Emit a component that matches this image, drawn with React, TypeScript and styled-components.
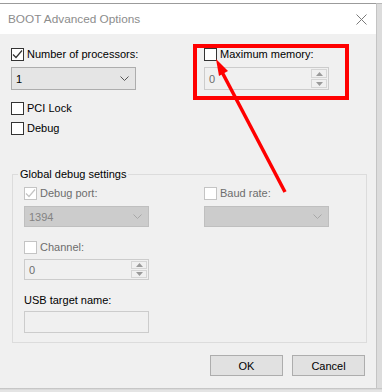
import React from "react";
import styled, { createGlobalStyle } from "styled-components";

const GlobalStyle = createGlobalStyle`
  html, body {
    margin: 0;
    padding: 0;
  }
  body {
    width: 382px;
    height: 392px;
    overflow: hidden;
    background: #ffffff;
    font-family: "Liberation Sans", Arial, sans-serif;
    font-size: 11px;
    color: #000;
  }
`;

const Screen = styled.div`
  position: relative;
  width: 382px;
  height: 392px;
  padding-top: 3px;
  box-sizing: border-box;
  display: flex;
  flex-direction: column;
`;

const Row = styled.div`
  display: flex;
  height: 385px;
`;

const Window = styled.div`
  width: 376px;
  display: flex;
  flex-direction: column;
  border-top: 1px solid #9b9b9b;
  box-sizing: border-box;
`;

const Backdrop = styled.div`
  flex: 1;
  background: #dcdcdc;
  border-left: 1px solid #c4c4c4;
  border-top: 1px solid #b9b9b9;
`;

const Shadow = styled.div`
  flex: 1;
  background: linear-gradient(#bdbdbd, #e4e4e4 2px);
`;

const TitleBar = styled.div`
  height: 30px;
  flex: none;
  background: #ffffff;
  display: flex;
  align-items: center;
  justify-content: space-between;
  padding: 0 9px 0 8px;
`;

const Title = styled.span`
  font-size: 11.8px;
  color: #8c8c8c;
`;

const Body = styled.div`
  flex: 1;
  background: #f0f0f0;
  padding: 14px 11px 0 11px;
  display: flex;
  flex-direction: column;
`;

const TopGrid = styled.div`
  display: grid;
  grid-template-columns: 193px 1fr;
  row-gap: 6px;
`;

const Options = styled.div`
  display: flex;
  flex-direction: column;
  gap: 7px;
  margin-top: 12px;
`;

const CheckRow = styled.label<{ $disabled?: boolean }>`
  display: flex;
  align-items: center;
  gap: 3px;
  height: 13px;
  line-height: 13px;
  color: ${(p) => (p.$disabled ? "#6d6d6d" : "#000")};
`;

const Box = styled.span<{ $disabled?: boolean }>`
  width: 13px;
  height: 13px;
  box-sizing: border-box;
  border: 1px solid ${(p) => (p.$disabled ? "#c4c4c4" : "#333")};
  background: #fff;
  display: flex;
  align-items: center;
  justify-content: center;
`;

const Combo = styled.div<{ $disabled?: boolean; $height: number }>`
  width: 125px;
  height: ${(p) => p.$height}px;
  box-sizing: border-box;
  border: 1px solid ${(p) => (p.$disabled ? "#bfbfbf" : "#adadad")};
  background: ${(p) => (p.$disabled ? "#cccccc" : "#e5e5e5")};
  color: ${(p) => (p.$disabled ? "#838383" : "#000")};
  display: flex;
  align-items: center;
  justify-content: space-between;
  padding: 0 6px 0 4px;
`;

const Spin = styled.div<{ $height: number }>`
  width: 125px;
  height: ${(p) => p.$height}px;
  box-sizing: border-box;
  border: 1px solid #cccccc;
  background: #f0f0f0;
  display: flex;
  color: #6d6d6d;
`;

const SpinValue = styled.div`
  flex: 1;
  display: flex;
  align-items: center;
  padding-left: 4px;
`;

const SpinButtons = styled.div`
  width: 16px;
  display: flex;
  flex-direction: column;
  gap: 1px;
  padding: 1px 1px 1px 0;
`;

const SpinButton = styled.div`
  flex: 1;
  border: 1px solid #d5d5d5;
  background: #f0f0f0;
  display: flex;
  align-items: center;
  justify-content: center;
`;

const TextBox = styled.div`
  width: 125px;
  height: 22px;
  box-sizing: border-box;
  border: 1px solid #cccccc;
  background: #f0f0f0;
`;

const Group = styled.fieldset`
  margin: 32px 0 0 1px;
  width: 355px;
  box-sizing: border-box;
  border: 1px solid #dcdcdc;
  padding: 5px 11px 9px 11px;
  min-width: 0;
`;

const Legend = styled.legend`
  padding: 0 2px;
  margin-left: -6px;
  line-height: 15px;
  color: #000;
`;

const GroupGrid = styled.div`
  display: grid;
  grid-template-columns: 180px 1fr;
  row-gap: 6px;
`;

const Stack = styled.div<{ $top: number; $gap: number }>`
  display: flex;
  flex-direction: column;
  gap: ${(p) => p.$gap}px;
  margin-top: ${(p) => p.$top}px;
`;

const FieldLabel = styled.div`
  height: 13px;
  line-height: 13px;
`;

const Buttons = styled.div`
  display: flex;
  justify-content: flex-end;
  gap: 9px;
  margin-top: 12px;
`;

const Button = styled.button`
  width: 73px;
  height: 21px;
  box-sizing: border-box;
  border: 1px solid #adadad;
  background: #e1e1e1;
  font-family: inherit;
  font-size: 11px;
  color: #000;
  padding: 0;
`;

const Annotation = styled.svg`
  position: absolute;
  left: 0;
  top: 0;
  pointer-events: none;
`;

const Check = ({
  label,
  checked,
  disabled,
}: {
  label: string;
  checked?: boolean;
  disabled?: boolean;
}) => (
  <CheckRow $disabled={disabled}>
    <Box $disabled={disabled}>
      {checked && (
        <svg width="11" height="11" viewBox="0 0 11 11">
          <path
            d="M1 5.5 L4 8.5 L10 1.5"
            fill="none"
            stroke={disabled ? "#c4c4c4" : "#333"}
            strokeWidth="1.2"
          />
        </svg>
      )}
    </Box>
    {label}
  </CheckRow>
);

const Chevron = ({ color }: { color: string }) => (
  <svg width="9" height="5" viewBox="0 0 9 5">
    <path d="M0.5 0.5 L4.5 4.5 L8.5 0.5" fill="none" stroke={color} strokeWidth="1" />
  </svg>
);

const Select = ({
  value,
  disabled,
  height,
}: {
  value: string;
  disabled?: boolean;
  height: number;
}) => (
  <Combo $disabled={disabled} $height={height}>
    <span>{value}</span>
    <Chevron color={disabled ? "#a8a8a8" : "#555"} />
  </Combo>
);

const Spinner = ({ value, height }: { value: string; height: number }) => (
  <Spin $height={height}>
    <SpinValue>{value}</SpinValue>
    <SpinButtons>
      <SpinButton>
        <svg width="7" height="4" viewBox="0 0 7 4">
          <path d="M0 4 L3.5 0 L7 4 Z" fill="#9a9a9a" />
        </svg>
      </SpinButton>
      <SpinButton>
        <svg width="7" height="4" viewBox="0 0 7 4">
          <path d="M0 0 L3.5 4 L7 0 Z" fill="#9a9a9a" />
        </svg>
      </SpinButton>
    </SpinButtons>
  </Spin>
);

export default function App() {
  return (
    <>
      <GlobalStyle />
      <Screen>
        <Row>
          <Window>
            <TitleBar>
              <Title>BOOT Advanced Options</Title>
              <svg width="11" height="11" viewBox="0 0 11 11">
                <path d="M0.5 0.5 L10.5 10.5 M10.5 0.5 L0.5 10.5" stroke="#7a7a7a" strokeWidth="1" />
              </svg>
            </TitleBar>
            <Body>
              <TopGrid>
                <Check label="Number of processors:" checked />
                <Check label="Maximum memory:" />
                <Select value="1" height={23} />
                <Spinner value="0" height={23} />
              </TopGrid>
              <Options>
                <Check label="PCI Lock" />
                <Check label="Debug" />
              </Options>
              <Group>
                <Legend>Global debug settings</Legend>
                <GroupGrid>
                  <Check label="Debug port:" checked disabled />
                  <Check label="Baud rate:" disabled />
                  <Select value="1394" disabled height={21} />
                  <Select value="" disabled height={21} />
                </GroupGrid>
                <Stack $top={14} $gap={5}>
                  <Check label="Channel:" disabled />
                  <Spinner value="0" height={21} />
                </Stack>
                <Stack $top={14} $gap={4}>
                  <FieldLabel>USB target name:</FieldLabel>
                  <TextBox />
                </Stack>
              </Group>
              <Buttons>
                <Button>OK</Button>
                <Button>Cancel</Button>
              </Buttons>
            </Body>
          </Window>
          <Backdrop />
        </Row>
        <Shadow />
        <Annotation width="382" height="392" viewBox="0 0 382 392">
          <rect x="195" y="46" width="152" height="52" fill="none" stroke="#ff0000" strokeWidth="4" />
          <line x1="285" y1="192" x2="222" y2="72" stroke="#ff0000" strokeWidth="3.5" />
          <polygon points="216,59 228,71 219,76" fill="#ff0000" />
        </Annotation>
      </Screen>
    </>
  );
}
